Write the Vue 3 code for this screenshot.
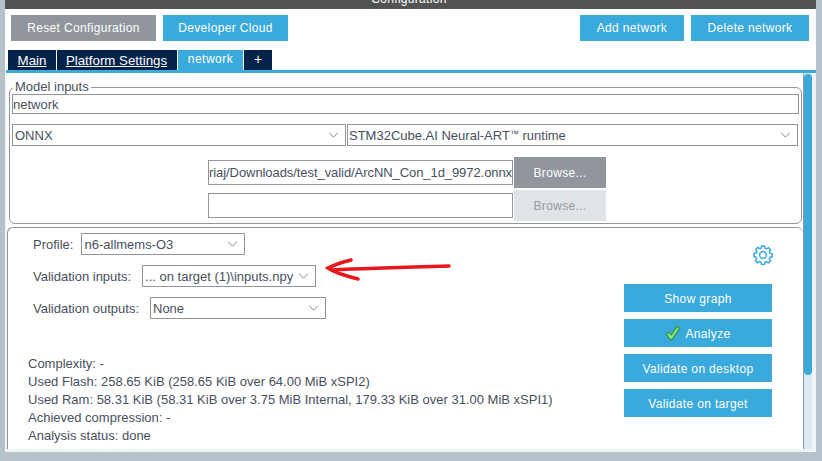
<script setup>
const actions = ['Show graph', 'Analyze', 'Validate on desktop', 'Validate on target']
const stats = [
  'Complexity: -',
  'Used Flash: 258.65 KiB (258.65 KiB over 64.00 MiB xSPI2)',
  'Used Ram: 58.31 KiB (58.31 KiB over 3.75 MiB Internal, 179.33 KiB over 31.00 MiB xSPI1)',
  'Achieved compression: -',
  'Analysis status: done'
]
</script>

<template>
  <div class="screen">
    <div class="window">
      <header class="title"><span>Configuration</span></header>
      <div class="toolbar">
        <div class="group">
          <button class="btn gray reset">Reset Configuration</button>
          <button class="btn cloud">Developer Cloud</button>
        </div>
        <div class="group">
          <button class="btn add">Add network</button>
          <button class="btn del">Delete network</button>
        </div>
      </div>
      <nav class="tabs">
        <a class="tab main"><u>Main</u></a>
        <a class="tab platform"><u>Platform Settings</u></a>
        <a class="tab active">network</a>
        <a class="tab plus">+</a>
      </nav>
      <div class="body">
        <div class="content">
          <fieldset class="model">
            <legend>Model inputs</legend>
            <div class="field name">network</div>
            <div class="selects">
              <div class="select onnx"><span>ONNX</span>
                <svg class="chev" viewBox="0 0 12 7"><path d="M1 1l5 5 5-5" /></svg>
              </div>
              <div class="select runtime"><span>STM32Cube.AI Neural-ART<small>™</small> runtime</span>
                <svg class="chev" viewBox="0 0 12 7"><path d="M1 1l5 5 5-5" /></svg>
              </div>
            </div>
            <div class="files">
              <div class="file-row">
                <div class="field path">riaj/Downloads/test_valid/ArcNN_Con_1d_9972.onnx</div>
                <button class="btn gray browse">Browse...</button>
              </div>
              <div class="file-row second">
                <div class="field path"></div>
                <button class="btn disabled browse">Browse...</button>
              </div>
            </div>
          </fieldset>
          <section class="analysis">
            <div class="columns">
              <div class="form">
                <div class="row">
                  <label>Profile:</label>
                  <div class="select profile"><span>n6-allmems-O3</span>
                    <svg class="chev" viewBox="0 0 12 7"><path d="M1 1l5 5 5-5" /></svg>
                  </div>
                </div>
                <div class="row">
                  <label>Validation inputs:</label>
                  <div class="select vin"><span>... on target (1)\inputs.npy</span>
                    <svg class="chev" viewBox="0 0 12 7"><path d="M1 1l5 5 5-5" /></svg>
                  </div>
                </div>
                <div class="row">
                  <label>Validation outputs:</label>
                  <div class="select vout"><span>None</span>
                    <svg class="chev" viewBox="0 0 12 7"><path d="M1 1l5 5 5-5" /></svg>
                  </div>
                </div>
              </div>
              <div class="side">
                <svg class="gear" viewBox="0 0 20 20">
                  <path d="M8.5 1h3l.4 2.3 1.6.7 2-1.3 2.1 2.1-1.3 2 .7 1.6 2.3.4v3l-2.3.4-.7 1.6 1.3 2-2.1 2.1-2-1.3-1.6.7-.4 2.3h-3l-.4-2.3-1.6-.7-2 1.3-2.1-2.1 1.3-2-.7-1.6L1 11.5v-3l2.3-.4.7-1.6-1.3-2 2.1-2.1 2 1.3 1.6-.7z" />
                  <circle cx="10" cy="10" r="3.4" />
                </svg>
                <div class="actions">
                  <button v-for="a in actions" :key="a" class="btn action">
                    <svg v-if="a === 'Analyze'" class="check" viewBox="0 0 16 16">
                      <path class="check-outer" d="M1 9.3 3.9 7l2.2 2.6L12 1l3 2.2L7 15H5z" />
                      <path class="check-inner" d="M2.8 9.5 4 8.6l2.2 2.8 6.3-8.6.9.7L6.5 13.4H5.6z" />
                    </svg>
                    {{ a }}
                  </button>
                </div>
              </div>
            </div>
            <div class="stats">
              <p v-for="s in stats" :key="s">{{ s }}</p>
            </div>
          </section>
        </div>
        <div class="scrollbar"><div class="thumb"></div></div>
      </div>
    </div>
    <svg class="arrow" viewBox="0 0 822 461">
      <path d="M449 266C410 267 368 268 332 270" />
      <path d="M351 260C343 262 334 265 328 268C335 273 346 276 358 279" />
    </svg>
  </div>
</template>

<style scoped>
.screen {
  position: relative;
  box-sizing: border-box;
  width: 822px;
  height: 461px;
  overflow: hidden;
  padding: 0 6px 9px 5px;
  background: #b6c2c9;
  font-family: "Liberation Sans", Arial, sans-serif;
  font-size: 13px;
  color: #48505e;
}
.window {
  display: flex;
  flex-direction: column;
  height: 100%;
  background: #f3f3f3;
}
.title {
  height: 9px;
  flex: none;
  overflow: hidden;
  background: #525453;
  color: #fff;
  text-align: center;
  font-size: 12px;
  letter-spacing: 0.3px;
  line-height: 9px;
  padding-right: 3px;
}
.title span {
  display: block;
  margin-top: -5px;
}
.toolbar {
  display: flex;
  justify-content: space-between;
  padding: 6px 7px 0 6px;
  height: 35px;
  flex: none;
  box-sizing: border-box;
  background: #fff;
}
.group {
  display: flex;
  gap: 7px;
}
.btn {
  border: 0;
  padding: 0;
  background: #3aa9dc;
  color: #fff;
  font: 12px "Liberation Sans", Arial, sans-serif;
  letter-spacing: 0.34px;
  height: 26px;
  text-align: center;
}
.gray { background: #90969c; }
.disabled { background: #e1e4e7; color: #94999e; }
.reset { width: 145px; }
.cloud { width: 125px; }
.add { width: 104px; }
.del { width: 118px; }
.tabs {
  display: flex;
  gap: 1px;
  height: 26px;
  box-sizing: border-box;
  flex: none;
  padding: 6px 0 0 3px;
  background: #fff;
}
.tab {
  display: block;
  background: #03234b;
  color: #fff;
  font-size: 13.3px;
  line-height: 21px;
  text-align: center;
}
.main { width: 48px; }
.platform { width: 120px; padding-right: 1px; box-sizing: border-box; }
.active {
  width: 65px;
  background: #3aa9dc;
  font-size: 12px;
  letter-spacing: 0.5px;
  line-height: 18px;
}
.plus { width: 28px; font-size: 14px; line-height: 18px; }
.body {
  flex: 1;
  display: flex;
  min-height: 0;
  margin-left: 1px;
  padding-bottom: 3px;
  border-top: 3px solid #3aa9dc;
}
.content {
  flex: none;
  width: 797px;
  padding-top: 1px;
  min-height: 0;
  background: #fff;
}
.model {
  box-sizing: border-box;
  margin: 6px 0 0 3px;
  width: 793px;
  height: 144px;
  padding: 0 2px;
  border: 1px solid #90969c;
  border-radius: 6px;
}
legend {
  margin-left: 1px;
  padding: 0 2px;
  font-size: 13px;
  line-height: 14px;
}
.field, .select {
  box-sizing: border-box;
  border: 1px solid #90969c;
  background: #fff;
  padding-left: 0;
  white-space: nowrap;
  overflow: hidden;
}
.field.name {
  height: 20px;
  line-height: 19px;
  font-size: 13px;
}
.selects {
  display: flex;
  gap: 1px;
  margin-top: 10px;
}
.select {
  display: flex;
  align-items: center;
  justify-content: space-between;
  padding: 0 3px 0 2px;
  font-size: 13px;
}
.chev {
  width: 11px;
  height: 6px;
  flex: none;
  margin-right: 3px;
  fill: none;
  stroke: #70757a;
  stroke-width: 1;
}
.onnx { width: 334px; height: 22px; }
.runtime { width: 451px; height: 22px; padding-left: 1px; }
.runtime small { font-size: 9px; vertical-align: 3px; }
.files {
  margin-top: 11px;
  padding-left: 196px;
}
.file-row {
  display: flex;
  align-items: center;
  gap: 1px;
  height: 31px;
}
.file-row.second { margin-top: 2px; }
.path {
  flex: none;
  width: 305px;
  height: 25px;
  line-height: 23px;
  font-size: 13px;
  letter-spacing: -0.07px;
}
.browse { width: 92px; height: 31px; }
.analysis {
  box-sizing: border-box;
  margin: 3px 0 0 1px;
  width: 796px;
  height: 222px;
  border: 1px solid #90969c;
  border-bottom: 0;
  border-right: 0;
  border-radius: 6px 6px 0 0;
  box-shadow: -2px 0 0 #f3f3f3;
}
.columns {
  display: flex;
  justify-content: space-between;
  height: 126px;
}
.form {
  padding: 5px 0 0 25px;
  display: flex;
  flex-direction: column;
  gap: 10px;
}
.row {
  display: flex;
  align-items: center;
  height: 22px;
  gap: 10px;
  font-size: 13px;
}
.profile { width: 164px; height: 22px; margin-left: -2px; }
.vin { width: 174px; height: 22px; margin-left: 1px; }
.vout { width: 176px; height: 22px; margin-left: 1px; }
.side {
  display: flex;
  flex-direction: column;
  align-items: flex-end;
  padding: 17px 31px 0 0;
}
.gear {
  flex: none;
  width: 20px;
  height: 20px;
  margin: 0 -1px 19px 0;
  fill: none;
  stroke: #3aa9dc;
  stroke-width: 1.5;
}
.actions {
  display: flex;
  flex: none;
  flex-direction: column;
  gap: 7px;
}
.action {
  width: 148px;
  height: 28px;
  padding-top: 1px;
  display: flex;
  align-items: center;
  justify-content: center;
  gap: 4px;
}
.check {
  width: 16px;
  height: 16px;
  flex: none;
  margin-top: -1px;
}
.check-outer {
  fill: #4cb85a;
  stroke: #2a9444;
  stroke-width: 1;
}
.check-inner {
  fill: #a6e89a;
  stroke: none;
}
.stats {
  padding: 1px 0 0 20px;
}
.stats p {
  margin: 0;
  height: 18px;
  line-height: 18px;
  font-size: 13px;
  white-space: nowrap;
}
.scrollbar {
  flex: none;
  box-sizing: border-box;
  width: 9px;
  background: #dce8f3;
  border-left: 1px solid #90969c;
}
.thumb {
  margin-top: 1px;
  height: 301px;
  background: #3aa9dc;
  border-radius: 4px;
}
.arrow {
  position: absolute;
  inset: 0;
  width: 822px;
  height: 461px;
  fill: none;
  stroke: #e8171c;
  stroke-width: 3.5;
  stroke-linecap: round;
  pointer-events: none;
}
</style>
